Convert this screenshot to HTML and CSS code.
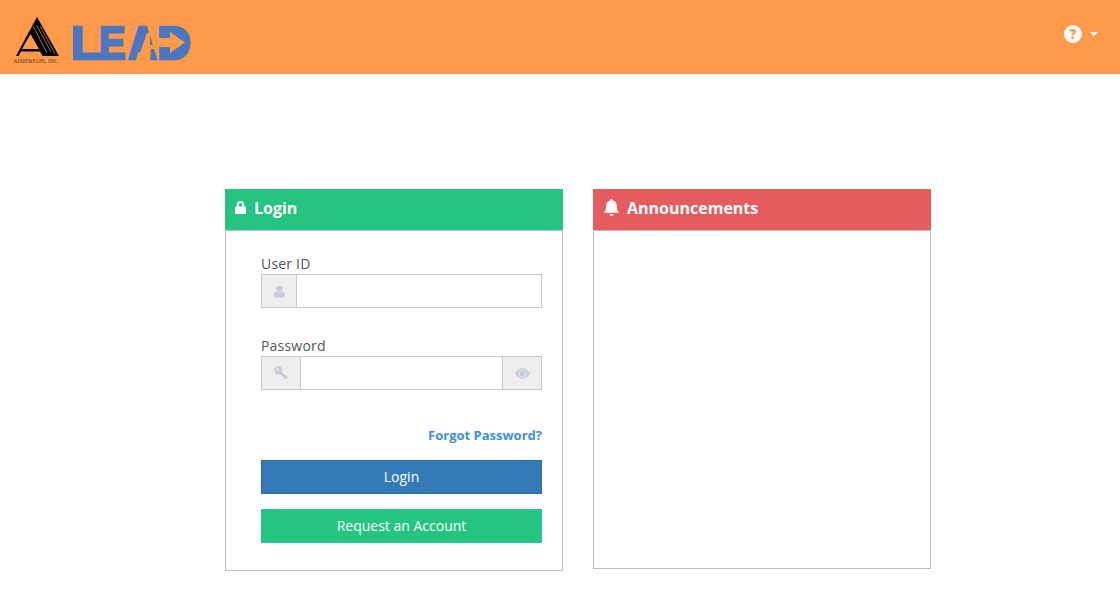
FILE: index.html
```html
<!DOCTYPE html>
<html lang="en">
<head>
<meta charset="utf-8">
<title>LEAD Login</title>
<link rel="stylesheet" href="styles.css">
</head>
<body>
<header class="topbar">
  <div class="brand">
    <div class="aim-logo">
      <svg class="aim-mark" viewBox="0 0 46 42" width="46" height="42" aria-hidden="true">
        <polygon points="23,1 45,40 2,40" fill="#000"/>
        <polygon points="16.500,18 8,33 25,33" fill="#ff9a4a"/>
        <polygon points="7,35.500 26,35.500 28.500,40 4.500,40" fill="#ff9a4a"/>
        <path d="M19 10 L33 37 M22.500 9 L37 36 M26 10 L41 38" stroke="#a87f58" stroke-width="0.900" fill="none"/>
      </svg>
      <span class="aim-name">AIMEREON, INC.</span>
    </div>
    <svg class="lead-logo" viewBox="-4 -8 124 62" width="124" height="62" role="img" aria-label="LEAD">
      <g class="lead-letters">
        <text transform="translate(-1 35) scale(1.050 1)">L</text>
        <text transform="translate(27 35) scale(0.850 1)">E</text>
        <text transform="translate(56 35) scale(0.850 1)">A</text>
        <text transform="translate(85 35)">D</text>
      </g>
      <polygon class="lead-fill" points="92,6 108,6 112,18 108,30 92,30"/>
      <polygon class="lead-fill" points="66,10 76,10 79,26 63,26"/>
      <polygon class="lead-cut" points="65,37 75,9 78,9 78,21 87,21 87,25 79,25 78,37"/>
      <polygon class="lead-cut" points="86,14 98,14 98,8 113,18.500 98,29 98,23 86,23"/>
    </svg>
  </div>
  <button class="help" type="button" aria-label="Help">
    <span class="help-circle">?</span>
    <span class="caret"></span>
  </button>
</header>

<main class="panels">
  <section class="panel">
    <h2 class="panel-head head-green">
      <svg class="head-icon" viewBox="0 0 12 14" width="11" height="13" aria-hidden="true">
        <path fill="#fff" fill-rule="evenodd" d="M2 6V4a4 4 0 0 1 8 0v2h1a1 1 0 0 1 1 1v6a1 1 0 0 1-1 1H1a1 1 0 0 1-1-1V7a1 1 0 0 1 1-1zM4 6h4V4a2 2 0 0 0-4 0z"/>
      </svg>
      <span>Login</span>
    </h2>
    <div class="panel-body login-body">
      <form class="login-form">
        <label class="field-label" for="uid">User ID</label>
        <div class="input-group">
          <span class="addon addon-user">
            <svg viewBox="0 0 12 13" width="11" height="13" aria-hidden="true">
              <circle cx="6" cy="3.500" r="3.400" fill="#c5cedb"/>
              <path fill="#c5cedb" d="M0 11c0-3 1.500-4.500 3-4.500 1 .8 2 1.200 3 1.200s2-.4 3-1.200c1.500 0 3 1.500 3 4.500 0 1.300-.8 2-2 2H2c-1.200 0-2-.7-2-2z"/>
            </svg>
          </span>
          <input id="uid" class="text-input" type="text">
        </div>
        <label class="field-label label-pass" for="pwd">Password</label>
        <div class="input-group">
          <span class="addon addon-icon">
            <svg viewBox="0 0 14 14" width="14" height="14" aria-hidden="true">
              <path fill="#c5cedb" fill-rule="evenodd" d="M4.200 0a4.200 4.200 0 1 1 0 8.400 4.200 4.200 0 0 1 0-8.400zM3.400 1.900a1.300 1.300 0 1 0 0 2.600 1.300 1.300 0 0 0 0-2.600z"/>
              <path fill="#c5cedb" d="M6.500 5.500 13.500 10.500 12.900 11.200 13.800 12.100 12.600 13.300 11.700 12.400 11 13 5 7.500z"/>
            </svg>
          </span>
          <input id="pwd" class="text-input" type="password">
          <span class="addon addon-icon addon-right">
            <svg viewBox="0 0 16 11" width="15" height="11" aria-hidden="true">
              <path fill="#c5cedb" fill-rule="evenodd" d="M8 0c3.500 0 6.300 2.200 8 5.500C14.300 8.800 11.500 11 8 11S1.700 8.800 0 5.500C1.700 2.200 4.500 0 8 0zM8 1.200a4.300 4.300 0 1 0 0 8.600 4.300 4.300 0 0 0 0-8.600z"/>
              <circle cx="8" cy="5.500" r="3.500" fill="#c5cedb"/>
            </svg>
          </span>
        </div>
        <a class="forgot" href="#">Forgot Password?</a>
        <button class="btn btn-blue" type="button">Login</button>
        <button class="btn btn-green" type="button">Request an Account</button>
      </form>
    </div>
  </section>

  <section class="panel">
    <h2 class="panel-head head-red">
      <svg class="head-icon bell" viewBox="0 0 16 16" width="17" height="17" aria-hidden="true">
        <path fill="#fff" d="M8 0a1.200 1.200 0 0 1 1.200 1.300C11.500 1.800 13 3.700 13 6c0 4 1 5.500 2.500 7H.5C2 11.500 3 10 3 6c0-2.300 1.500-4.200 3.800-4.700A1.200 1.200 0 0 1 8 0zM6 14h4a2 2 0 0 1-4 0z"/>
      </svg>
      <span>Announcements</span>
    </h2>
    <div class="panel-body ann-body"></div>
  </section>
</main>
</body>
</html>
```

FILE: styles.css
```css
* {
  box-sizing: border-box;
}

html,
body {
  margin: 0;
  padding: 0;
  background: #fff;
  font-family: "Open Sans", "Liberation Sans", sans-serif;
  color: #4d4d4d;
}

.topbar {
  height: 74px;
  background: #ff9a4a;
  display: flex;
  align-items: flex-start;
  justify-content: space-between;
  padding: 16px 22px 0 13px;
}

.brand {
  display: flex;
  align-items: flex-start;
  gap: 8px;
}

.aim-logo {
  width: 47px;
  display: flex;
  flex-direction: column;
  align-items: center;
}

.aim-mark {
  display: block;
}

.aim-name {
  font-family: "Liberation Serif", serif;
  font-size: 6px;
  line-height: 7px;
  white-space: nowrap;
  color: #5a3c22;
}

.lead-logo {
  display: block;
  margin-top: 0;
  overflow: visible;
}

.lead-letters {
  font-family: "Liberation Sans", sans-serif;
  font-weight: 700;
  font-size: 47px;
  fill: #4c77c0;
  stroke: #4c77c0;
  stroke-width: 2.500px;
}

.lead-fill {
  fill: #4c77c0;
}

.lead-cut {
  fill: #ff9a4a;
}

.help {
  display: flex;
  align-items: center;
  gap: 8px;
  margin-top: 9px;
  padding: 0;
  border: 0;
  background: none;
}

.help-circle {
  width: 18px;
  height: 18px;
  border-radius: 50%;
  background: #fff;
  color: #ff9a4a;
  font-family: "Open Sans", sans-serif;
  font-weight: 800;
  font-size: 14px;
  line-height: 18px;
  text-align: center;
}

.caret {
  width: 0;
  height: 0;
  border-left: 4px solid transparent;
  border-right: 4px solid transparent;
  border-top: 4px solid #fff;
}

.panels {
  display: flex;
  align-items: flex-start;
  gap: 30px;
  padding: 115px 0 0 225px;
}

.panel {
  width: 338px;
}

.panel-head {
  margin: 0;
  height: 41px;
  display: flex;
  align-items: center;
  gap: 8px;
  padding: 0 10px 4px;
  color: #fff;
  font-size: 16px;
  font-weight: 700;
}

.head-green {
  background: #26c481;
}

.head-red {
  background: #e55c5f;
  gap: 7px;
}

.head-icon {
  flex: none;
}

.panel-body {
  border: 1px solid #bdbdbd;
  background: #fff;
}

.login-body {
  height: 341px;
  padding: 23px 20px 0 35px;
}

.ann-body {
  height: 339px;
}

.login-form {
  display: flex;
  flex-direction: column;
}

.field-label {
  display: block;
  font-size: 14px;
  line-height: 20px;
  letter-spacing: 0.200px;
  color: #555;
}

.label-pass {
  margin-top: 28px;
}

.input-group {
  display: flex;
  height: 34px;
  border: 1px solid #c8c8c8;
}

.addon {
  flex: none;
  display: flex;
  align-items: center;
  justify-content: center;
  background: #eeeeee;
  border-right: 1px solid #c8c8c8;
}

.addon-user {
  width: 35px;
}

.addon-icon {
  width: 39px;
}

.addon-right {
  border-right: 0;
  border-left: 1px solid #c8c8c8;
}

.text-input {
  flex: 1;
  min-width: 0;
  border: 0;
  padding: 6px 12px;
  background: #fff;
  outline: none;
}

.forgot {
  margin-top: 36px;
  align-self: flex-end;
  color: #3c90dc;
  font-size: 13px;
  font-weight: 700;
  line-height: 18px;
  text-decoration: none;
}

.btn {
  height: 34px;
  border: 1px solid;
  color: #fff;
  font-family: "Open Sans", sans-serif;
  font-size: 14px;
  padding: 0 0 2px;
}

.btn-blue {
  margin-top: 16px;
  background: #337ab7;
  border-color: #2e6da4;
}

.btn-green {
  margin-top: 15px;
  background: #26c481;
  border-color: #26c4a0;
}
```
